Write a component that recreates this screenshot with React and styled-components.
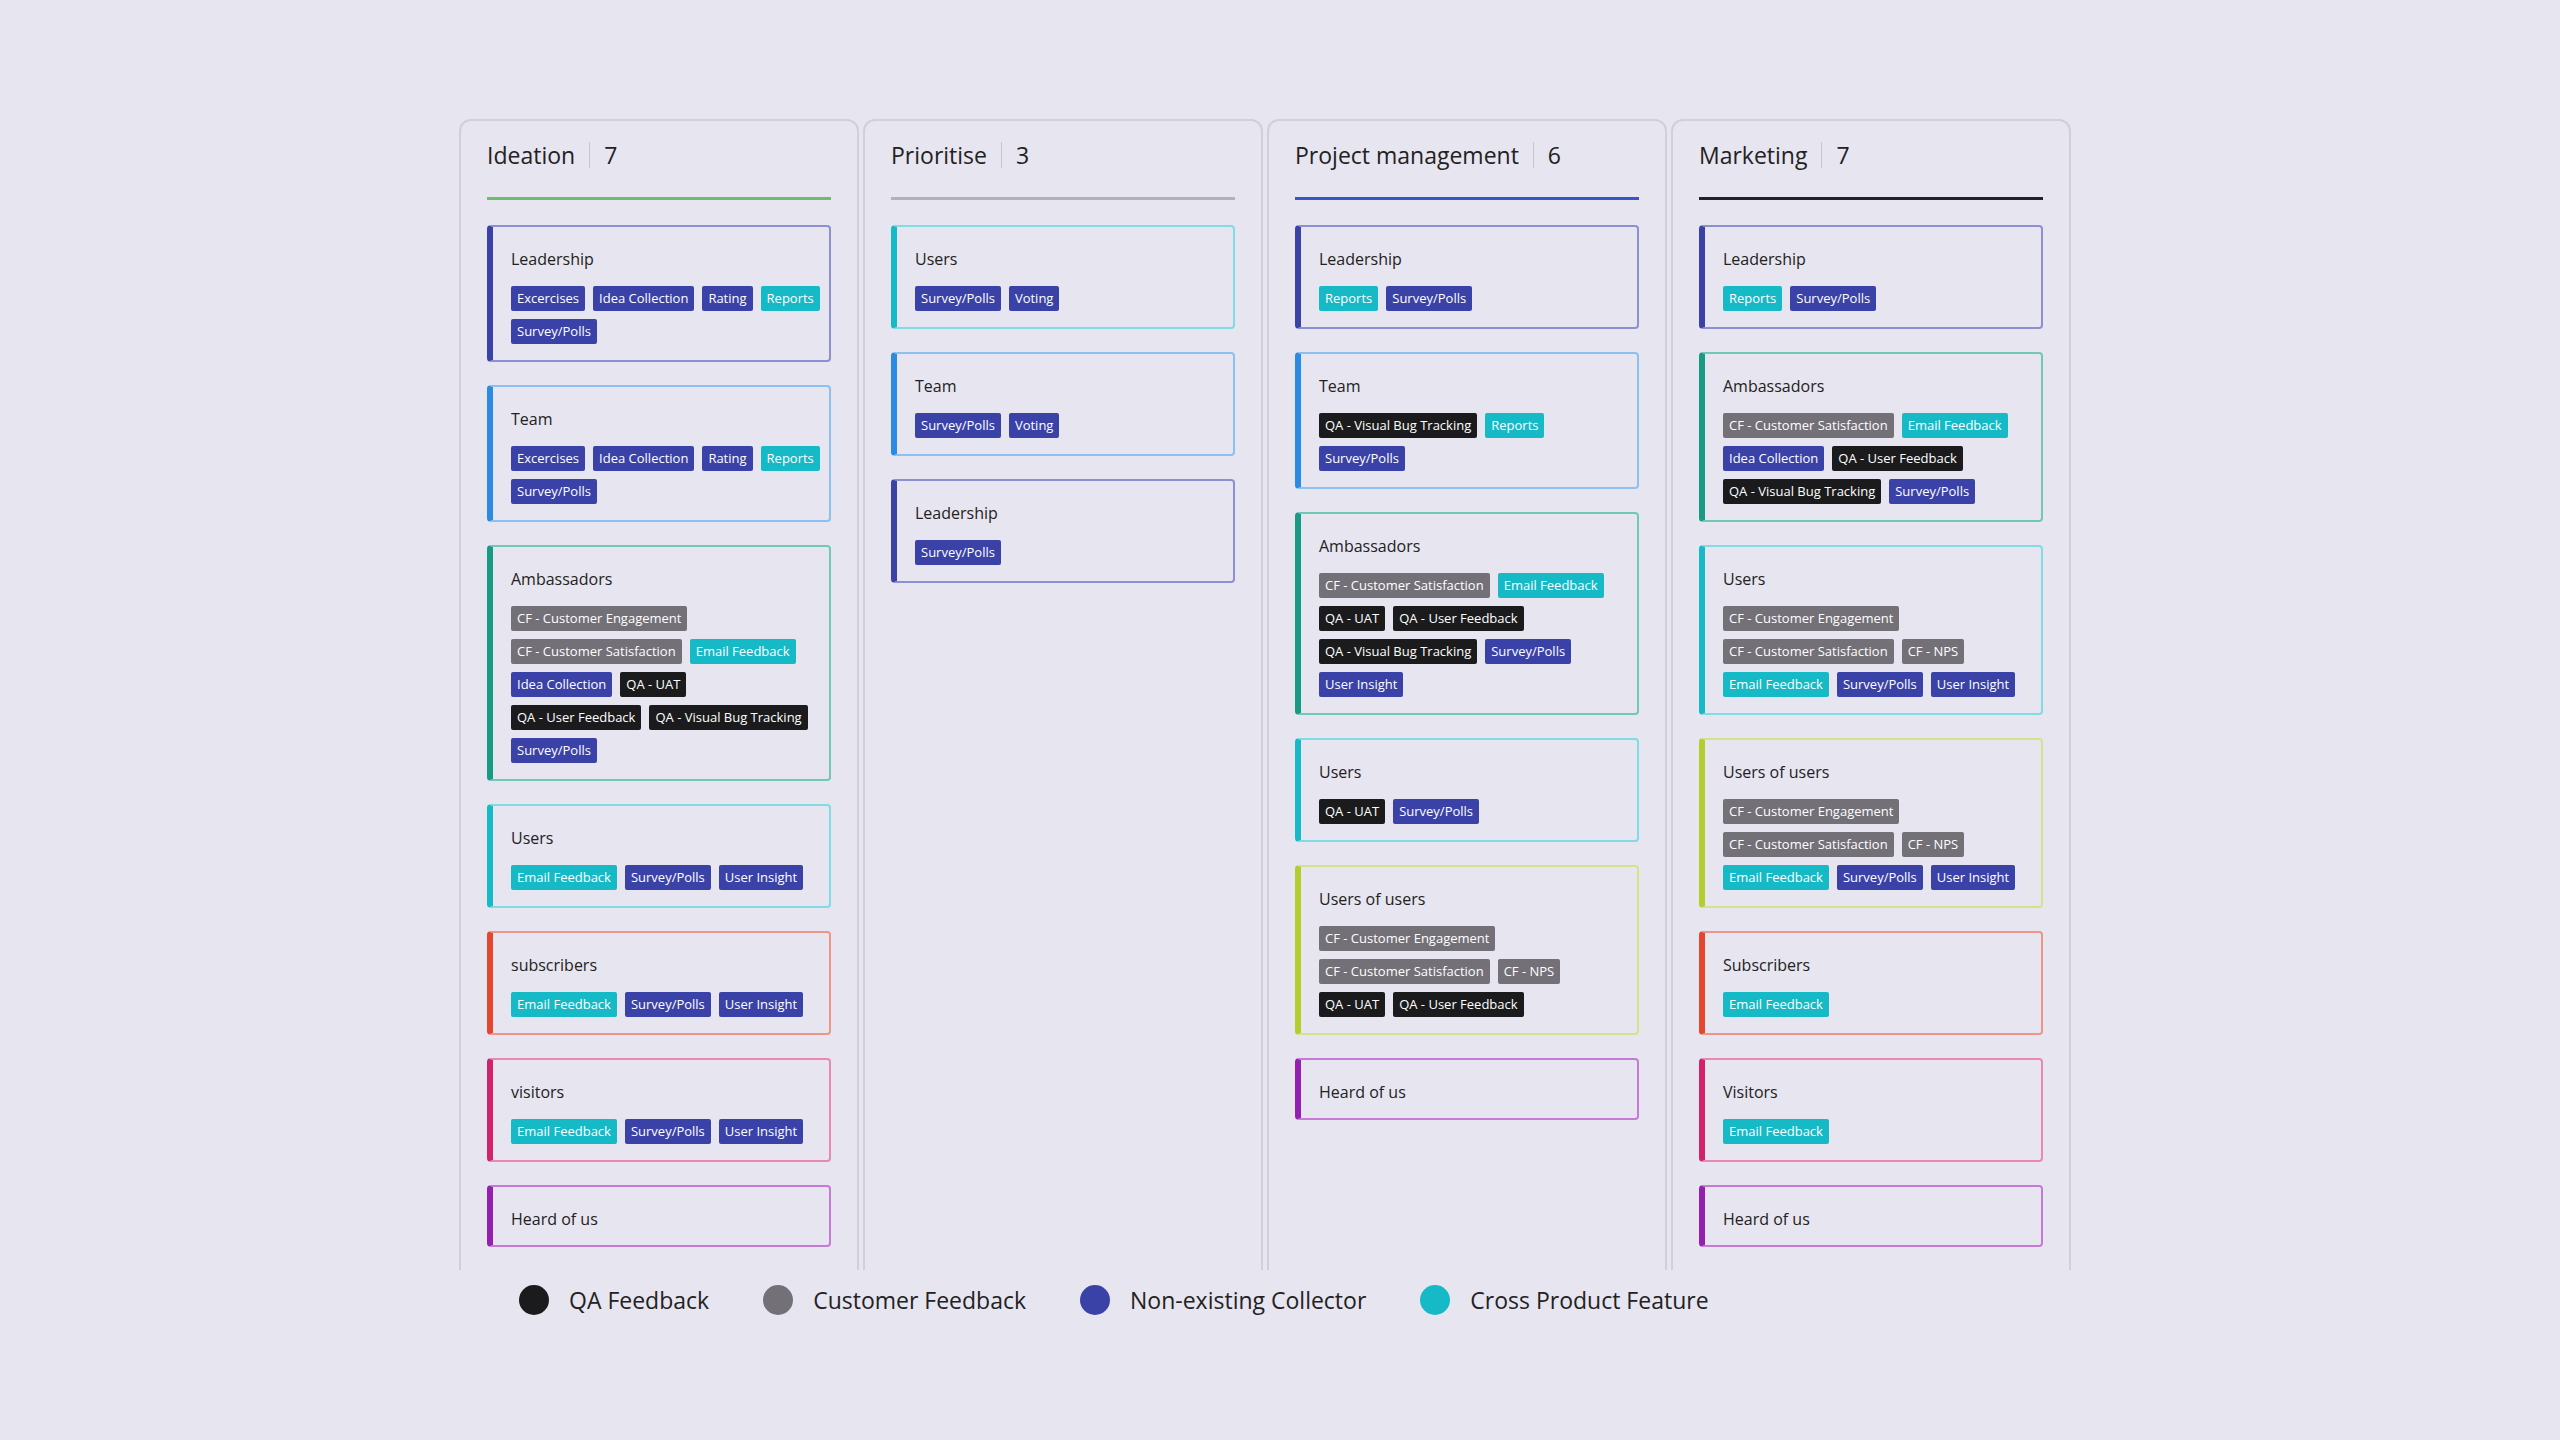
import React from 'react';
import styled, { createGlobalStyle } from 'styled-components';

const GlobalStyle = createGlobalStyle`
  body {
    margin: 0;
    background: #e7e5f0;
    font-family: "Open Sans", "Noto Sans", sans-serif;
    color: #222;
  }
`;

const ACCENT = {
  Leadership: ['#3a42a8', '#8c90d0'],
  Team: ['#2b8ae2', '#8cc0f0'],
  Ambassadors: ['#199a82', '#6fc8b8'],
  Users: ['#16b9c6', '#80dbe3'],
  subscribers: ['#e4472e', '#ef9585'],
  Subscribers: ['#e4472e', '#ef9585'],
  visitors: ['#d2226c', '#e88ab0'],
  Visitors: ['#d2226c', '#e88ab0'],
  'Heard of us': ['#9420b2', '#c67ad8'],
  'Users of users': ['#b5cc2e', '#d6e28a'],
};

const TAG = { nav: '#3a42a8', cyan: '#16b9c6', grey: '#737078', black: '#1b1b1d' };

const kindOf = (t) => {
  if (t.startsWith('QA')) return 'black';
  if (t.startsWith('CF')) return 'grey';
  if (t === 'Reports' || t === 'Email Feedback') return 'cyan';
  return 'nav';
};

const Page = styled.div`
  padding: 119px 0 0 459px;
  min-height: 1440px;
  box-sizing: border-box;
`;

const Board = styled.div`
  display: flex;
  gap: 4px;
`;

const Column = styled.div`
  width: 400px;
  height: 1151px;
  box-sizing: border-box;
  border: 2px solid #d2cfd9;
  border-bottom: none;
  border-radius: 12px 12px 0 0;
  padding: 13px 26px 0;
`;

const Header = styled.div`
  display: flex;
  align-items: center;
  font-size: 23px;
  height: 42px;
  padding-bottom: 21px;
  border-bottom: 3px solid ${(p) => p.$line};
  margin-bottom: 25px;
`;

const Count = styled.span`
  margin-left: 14px;
  padding-left: 14px;
  border-left: 1px solid #c8c5cf;
  line-height: 26px;
`;

const Cards = styled.div`
  display: flex;
  flex-direction: column;
  gap: 23px;
`;

const Card = styled.div`
  border: 2px solid ${(p) => p.$soft};
  border-left: 6px solid ${(p) => p.$main};
  border-radius: 4px;
  padding: 22px 8px 16px 18px;
`;

const Title = styled.div`
  font-size: 16px;
  line-height: 20px;
`;

const Tags = styled.div`
  display: flex;
  flex-wrap: wrap;
  gap: 8px 8px;
  margin-top: 17px;
`;

const Tag = styled.span`
  background: ${(p) => TAG[p.$kind]};
  color: #fff;
  font-size: 13px;
  line-height: 25px;
  padding: 0 6px;
  border-radius: 2px;
`;

const Legend = styled.div`
  display: flex;
  align-items: center;
  padding: 14px 0 0 60px;
  font-size: 23px;
`;

const LegendItem = styled.div`
  display: flex;
  align-items: center;
  gap: 20px;
  margin-right: 54px;
`;

const Dot = styled.span`
  width: 30px;
  height: 30px;
  border-radius: 50%;
  background: ${(p) => p.$c};
`;

const EX = ['Excercises', 'Idea Collection', 'Rating', 'Reports', 'Survey/Polls'];
const USR = ['Email Feedback', 'Survey/Polls', 'User Insight'];

const columns = [
  {
    name: 'Ideation', count: 7, line: '#6dbd6d',
    cards: [
      ['Leadership', EX],
      ['Team', EX],
      ['Ambassadors', ['CF - Customer Engagement', 'CF - Customer Satisfaction', 'Email Feedback', 'Idea Collection', 'QA - UAT', 'QA - User Feedback', 'QA - Visual Bug Tracking', 'Survey/Polls']],
      ['Users', USR],
      ['subscribers', USR],
      ['visitors', USR],
      ['Heard of us', []],
    ],
  },
  {
    name: 'Prioritise', count: 3, line: '#b3b0b9',
    cards: [
      ['Users', ['Survey/Polls', 'Voting']],
      ['Team', ['Survey/Polls', 'Voting']],
      ['Leadership', ['Survey/Polls']],
    ],
  },
  {
    name: 'Project management', count: 6, line: '#3a56c2',
    cards: [
      ['Leadership', ['Reports', 'Survey/Polls']],
      ['Team', ['QA - Visual Bug Tracking', 'Reports', 'Survey/Polls']],
      ['Ambassadors', ['CF - Customer Satisfaction', 'Email Feedback', 'QA - UAT', 'QA - User Feedback', 'QA - Visual Bug Tracking', 'Survey/Polls', 'User Insight']],
      ['Users', ['QA - UAT', 'Survey/Polls']],
      ['Users of users', ['CF - Customer Engagement', 'CF - Customer Satisfaction', 'CF - NPS', 'QA - UAT', 'QA - User Feedback']],
      ['Heard of us', []],
    ],
  },
  {
    name: 'Marketing', count: 7, line: '#222226',
    cards: [
      ['Leadership', ['Reports', 'Survey/Polls']],
      ['Ambassadors', ['CF - Customer Satisfaction', 'Email Feedback', 'Idea Collection', 'QA - User Feedback', 'QA - Visual Bug Tracking', 'Survey/Polls']],
      ['Users', ['CF - Customer Engagement', 'CF - Customer Satisfaction', 'CF - NPS', 'Email Feedback', 'Survey/Polls', 'User Insight']],
      ['Users of users', ['CF - Customer Engagement', 'CF - Customer Satisfaction', 'CF - NPS', 'Email Feedback', 'Survey/Polls', 'User Insight']],
      ['Subscribers', ['Email Feedback']],
      ['Visitors', ['Email Feedback']],
      ['Heard of us', []],
    ],
  },
];

const legend = [
  ['QA Feedback', TAG.black],
  ['Customer Feedback', TAG.grey],
  ['Non-existing Collector', TAG.nav],
  ['Cross Product Feature', TAG.cyan],
];

export default function App() {
  return (
    <Page>
      <GlobalStyle />
      <Board>
        {columns.map((col) => (
          <Column key={col.name}>
            <Header $line={col.line}>
              {col.name}
              <Count>{col.count}</Count>
            </Header>
            <Cards>
              {col.cards.map(([title, tags], i) => (
                <Card key={i} $main={ACCENT[title][0]} $soft={ACCENT[title][1]}>
                  <Title>{title}</Title>
                  {tags.length > 0 && (
                    <Tags>
                      {tags.map((t) => (
                        <Tag key={t} $kind={kindOf(t)}>{t}</Tag>
                      ))}
                    </Tags>
                  )}
                </Card>
              ))}
            </Cards>
          </Column>
        ))}
      </Board>
      <Legend>
        {legend.map(([label, c]) => (
          <LegendItem key={label}>
            <Dot $c={c} />
            {label}
          </LegendItem>
        ))}
      </Legend>
    </Page>
  );
}
